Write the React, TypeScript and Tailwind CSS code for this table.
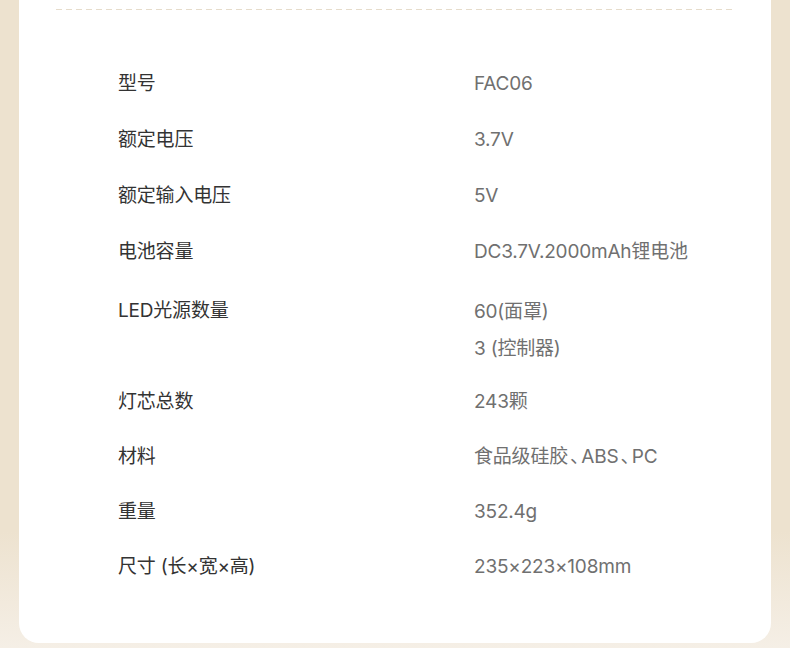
import React from "react";

const rows: { label: string; values: string[]; mt: string }[] = [
  { label: "型号", values: ["FAC06"], mt: "mt-[65px]" },
  { label: "额定电压", values: ["3.7V"], mt: "mt-[20px]" },
  { label: "额定输入电压", values: ["5V"], mt: "mt-[20px]" },
  { label: "电池容量", values: ["DC3.7V.2000mAh锂电池"], mt: "mt-[20px]" },
  { label: "LED光源数量", values: ["60(面罩)", "3 (控制器)"], mt: "mt-[23px]" },
  { label: "灯芯总数", values: ["243颗"], mt: "mt-[17px]" },
  { label: "材料", values: ["食品级硅胶、ABS、PC"], mt: "mt-[19px]" },
  { label: "重量", values: ["352.4g"], mt: "mt-[19px]" },
  { label: "尺寸 (长×宽×高)", values: ["235×223×108mm"], mt: "mt-[19px]" },
];

function renderValue(v: string) {
  const parts = v.split("、");
  return parts.map((p, i) => (
    <React.Fragment key={i}>
      {p}
      {i < parts.length - 1 && <span className="px-[2px]">、</span>}
    </React.Fragment>
  ));
}

export default function App() {
  return (
    <div className="w-[790px] h-[648px] overflow-hidden bg-[linear-gradient(to_bottom,#ede2cf_0%,#ede2cf_82%,#f5efe6_100%)] px-[19px] pb-[5px] flex flex-col font-['Inter','Noto_Sans_CJK_SC',sans-serif]">
      <div className="flex-1 bg-white rounded-b-[20px] flex flex-col">
        <div className="mt-[9px] mx-[37px] h-px bg-[repeating-linear-gradient(to_right,#e6dccb_0px,#e6dccb_6px,transparent_6px,transparent_10px)]" />
        <div className="-mt-[9px] pl-[99px] flex flex-col">
          {rows.map((r) => (
            <div key={r.label} className={`flex text-[19px] ${r.mt}`}>
              <div className="w-[356px] leading-[36px] text-[#333333] tracking-[-0.2px]">{r.label}</div>
              <div className={`flex flex-col text-[#707070] tracking-[-0.2px] [font-feature-settings:'halt'] ${r.values.length > 1 ? "leading-[37px]" : "leading-[36px]"}`}>
                {r.values.map((v) => (
                  <div key={v}>{renderValue(v)}</div>
                ))}
              </div>
            </div>
          ))}
        </div>
      </div>
    </div>
  );
}
